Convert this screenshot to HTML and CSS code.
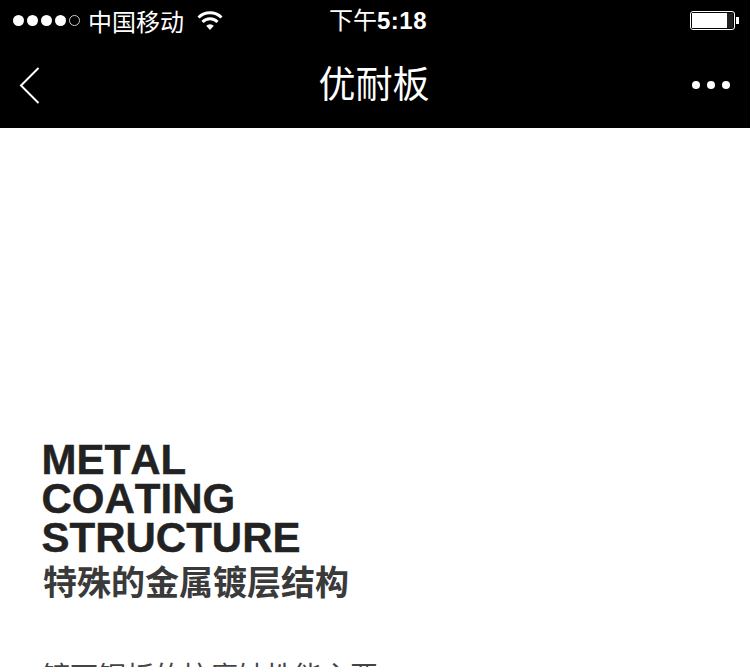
FILE: index.html
```html
<!DOCTYPE html>
<html lang="zh-CN">
<head>
    <meta charset="UTF-8">
    <meta name="viewport" content="width=device-width, initial-scale=1.0">
    <title>优耐板</title>
    <link rel="stylesheet" href="styles.css">
</head>
<body>
    <header class="top-bar">
        <div class="status-bar">
            <div class="status-left">
                <span class="signal">
                    <i class="dot"></i><i class="dot"></i><i class="dot"></i><i class="dot"></i><i class="dot dot-empty"></i>
                </span>
                <span class="carrier">中国移动</span>
                <svg class="wifi" width="26" height="20" viewBox="0 0 26 20">
                    <path d="M1.500 7.500a16.500 16.500 0 0 1 23 0" fill="none" stroke="#fff" stroke-width="3"/>
                    <path d="M5.500 12a10.500 10.500 0 0 1 15 0" fill="none" stroke="#fff" stroke-width="3"/>
                    <path d="M13 20l-3.800-4.200a5.200 5.200 0 0 1 7.600 0z" fill="#fff"/>
                </svg>
            </div>
            <div class="clock">下午<b>5:18</b></div>
            <div class="battery">
                <div class="battery-body"><div class="battery-level"></div></div>
                <div class="battery-tip"></div>
            </div>
        </div>
        <nav class="nav-bar">
            <svg class="back" width="22" height="38" viewBox="0 0 22 38">
                <path d="M19.500 2L2 19.500 19.500 37" fill="none" stroke="#fff" stroke-width="2"/>
            </svg>
            <h1 class="nav-title">优耐板</h1>
            <div class="more"><i></i><i></i><i></i></div>
        </nav>
    </header>

    <main class="content">
        <h2 class="title-en">METAL<br>COATING<br>STRUCTURE</h2>
        <h3 class="title-cn">特殊的金属镀层结构</h3>
        <p class="body-text">镀面钢板的抗腐蚀性能主要</p>
    </main>
</body>
</html>
```

FILE: styles.css
```css
html, body {
    height: 100%;
}
body {
    margin: 0;
    background: #fff;
    font-family: "Liberation Sans", "Noto Sans CJK SC", sans-serif;
    overflow: hidden;
}
.top-bar {
    background: #000;
    color: #fff;
    height: 128px;
}
.status-bar {
    height: 40px;
    display: flex;
    align-items: center;
    justify-content: space-between;
    padding: 0 11px 0 13px;
    position: relative;
}
.status-left {
    display: flex;
    align-items: center;
}
.signal {
    display: flex;
    gap: 3px;
}
.dot {
    width: 11px;
    height: 11px;
    border-radius: 50%;
    background: #fff;
    box-sizing: border-box;
}
.dot-empty {
    background: none;
    border: 1px solid #ccc;
}
.carrier {
    font-size: 24px;
    margin-left: 8px;
}
.wifi {
    margin: 0 0 1px 13px;
}
.clock {
    position: absolute;
    left: 329px;
    top: 6px;
    font-size: 24px;
    line-height: 30px;
}
.clock b {
    font-weight: bold;
    letter-spacing: .5px;
}
.battery {
    display: flex;
    align-items: center;
}
.battery-body {
    width: 45px;
    height: 19px;
    border: 1px solid #fff;
    border-radius: 3px;
    box-sizing: border-box;
    padding: 1px;
    background: #000;
}
.battery-level {
    width: 35px;
    height: 100%;
    background: #fff;
    box-shadow: 6px 0 0 #222;
}
.battery-tip {
    width: 3px;
    height: 7px;
    background: #fff;
    margin-left: 1px;
}
.nav-bar {
    height: 88px;
    box-sizing: border-box;
    padding: 2px 20px 0 19px;
    display: flex;
    align-items: center;
    justify-content: space-between;
    position: relative;
}
.nav-title {
    position: absolute;
    left: -2px;
    right: 0;
    top: 24px;
    margin: 0;
    text-align: center;
    font-size: 37px;
    line-height: 44px;
    font-weight: normal;
}
.more {
    display: flex;
    gap: 7px;
}
.more i {
    width: 8px;
    height: 8px;
    border-radius: 50%;
    background: #fff;
}
.content {
    padding: 312px 41px 0;
}
.title-en {
    margin: 0 0 0 .5px;
    font-size: 42px;
    line-height: 39px;
    font-weight: bold;
    font-kerning: none;
    -webkit-text-stroke: .4px #222;
    color: #222;
}
.title-cn {
    margin: 6px 0 0 2px;
    font-size: 34px;
    line-height: 40px;
    font-weight: bold;
    color: #3a3a3a;
}
.body-text {
    margin: 51px 0 0 1px;
    font-size: 28px;
    line-height: 48px;
    color: #444;
}
```
